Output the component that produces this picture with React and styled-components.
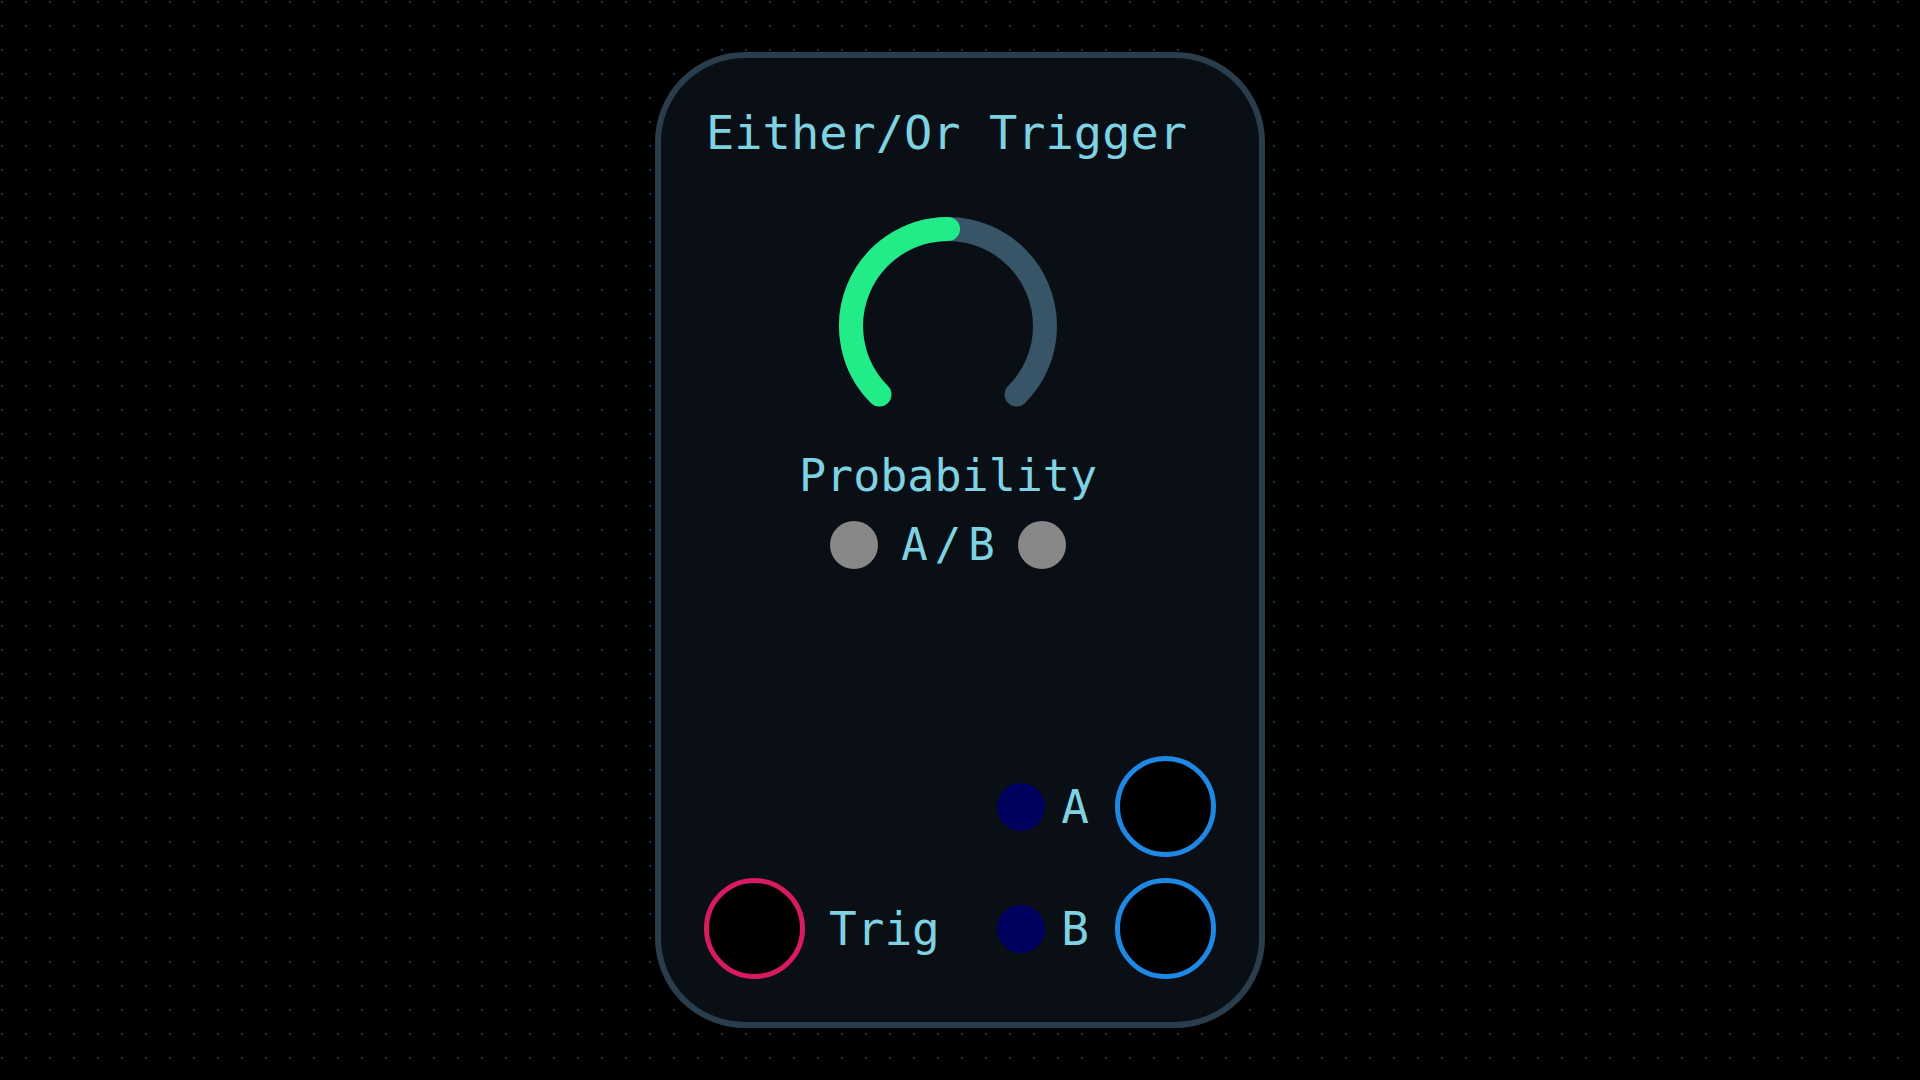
import React from 'react'
import styled, { createGlobalStyle } from 'styled-components'

const MONO = `'DejaVu Sans Mono', 'Liberation Mono', monospace`

const GlobalStyle = createGlobalStyle`
html, body {
  margin: 0;
  padding: 0;
}
body {
  background-color: #000;
  background-image: radial-gradient(circle at 2px 2px, #1d3444 1px, transparent 1.6px);
  background-size: 24px 24px;
  font-family: ${MONO};
}
`

const Stage = styled.div`
  min-height: 100vh;
  display: flex;
  align-items: center;
  justify-content: center;
`

const Module = styled.div`
  box-sizing: border-box;
  width: 610px;
  height: 976px;
  border: 6px solid #2a3d4c;
  border-radius: 90px;
  background: rgba(11, 16, 22, 0.94);
  padding: 43px;
  display: flex;
  flex-direction: column;
`

const Title = styled.h1`
  margin: 4px 0 0 2px;
  font-family: ${MONO};
  font-weight: 400;
  font-size: 47px;
  line-height: normal;
  color: #7fd2e2;
  white-space: nowrap;
`

const Section = styled.div`
  display: flex;
  flex-direction: column;
  align-items: center;
  padding-right: 24px;
`

const KnobSvg = styled.svg`
  display: block;
  margin-top: 46px;
`

const KnobLabel = styled.div`
  margin-top: 3px;
  font-size: 45px;
  line-height: normal;
  color: #7fd2e2;
`

const SwitchRow = styled.div`
  margin-top: 17px;
  display: flex;
  align-items: center;
  gap: 23px;
`

const SwitchText = styled.span`
  font-size: 44px;
  letter-spacing: 7px;
  margin-right: -7px;
  color: #7fd2e2;
`

const Spacer = styled.div`
  flex: 1;
`

const Ports = styled.div`
  display: flex;
  flex-direction: column;
  gap: 21px;
`

const PortRow = styled.div`
  display: flex;
  align-items: center;
  justify-content: ${p => (p.$split ? 'space-between' : 'flex-end')};
`

const Group = styled.div`
  display: flex;
  align-items: center;
  gap: ${p => p.$gap || 16}px;
`

const Led = styled.div`
  width: 48px;
  height: 48px;
  border-radius: 50%;
  background: ${p => p.$color};
  flex-shrink: 0;
`

const Jack = styled.div`
  box-sizing: border-box;
  width: 101px;
  height: 101px;
  border-radius: 50%;
  border: 5px solid ${p => p.$color};
  background: #000;
  flex-shrink: 0;
`

const PortLabel = styled.span`
  font-size: 46px;
  line-height: normal;
  color: #7fd2e2;
  margin-right: ${p => p.$mr || 0}px;
`

const polar = (cx, cy, r, deg) => {
  const a = (deg * Math.PI) / 180
  return [cx + r * Math.sin(a), cy - r * Math.cos(a)]
}

const arc = (cx, cy, r, from, to) => {
  const [x1, y1] = polar(cx, cy, r, from)
  const [x2, y2] = polar(cx, cy, r, to)
  const large = to - from > 180 ? 1 : 0
  return `M ${x1} ${y1} A ${r} ${r} 0 ${large} 1 ${x2} ${y2}`
}

const Knob = ({ value }) => {
  const start = -135
  const end = 135
  const v = start + (end - start) * value
  return (
    <KnobSvg width='240' height='240' viewBox='0 0 240 240'>
      <path d={arc(120, 120, 97, start, end)} fill='none' stroke='#385567' strokeWidth='24' strokeLinecap='round' />
      <path d={arc(120, 120, 97, start, v)} fill='none' stroke='#22ec88' strokeWidth='24' strokeLinecap='round' />
    </KnobSvg>
  )
}

export default function App () {
  return (
    <Stage>
      <GlobalStyle />
      <Module>
        <Title>Either/Or Trigger</Title>
        <Section>
          <Knob value={0.5} />
          <KnobLabel>Probability</KnobLabel>
          <SwitchRow>
            <Led $color='#888888' />
            <SwitchText>A/B</SwitchText>
            <Led $color='#888888' />
          </SwitchRow>
        </Section>
        <Spacer />
        <Ports>
          <PortRow>
            <Group>
              <Led $color='#00005e' />
              <PortLabel $mr={10}>A</PortLabel>
              <Jack $color='#1e88e5' />
            </Group>
          </PortRow>
          <PortRow $split>
            <Group $gap={24}>
              <Jack $color='#d81b60' />
              <PortLabel>Trig</PortLabel>
            </Group>
            <Group>
              <Led $color='#00005e' />
              <PortLabel $mr={10}>B</PortLabel>
              <Jack $color='#1e88e5' />
            </Group>
          </PortRow>
        </Ports>
      </Module>
    </Stage>
  )
}
